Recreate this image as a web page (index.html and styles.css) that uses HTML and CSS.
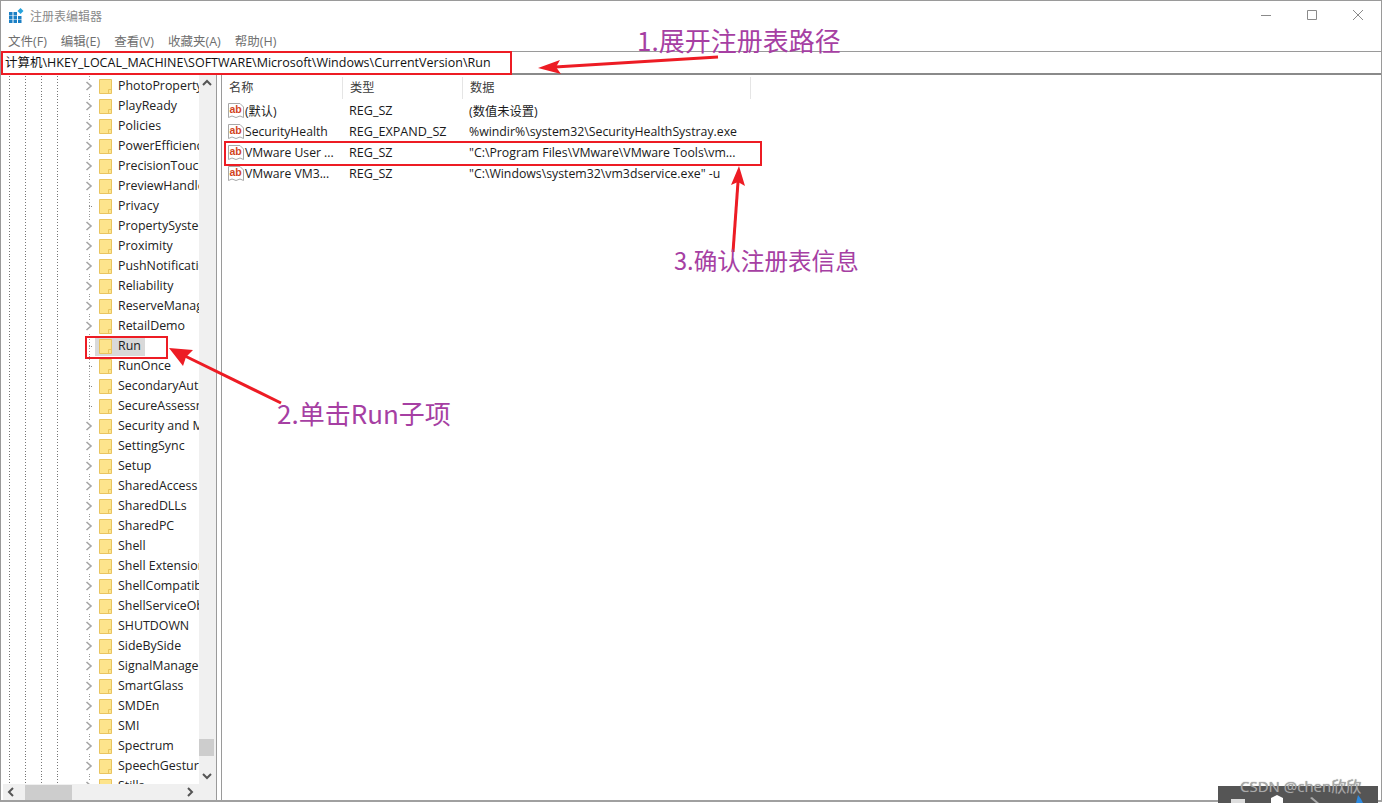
FILE: index.html
```html
<!DOCTYPE html>
<html lang="zh-CN">
<head>
<meta charset="utf-8">
<title>注册表编辑器</title>
<link rel="stylesheet" href="styles.css">
</head>
<body>
<svg class="defs" width="0" height="0" aria-hidden="true">
  <symbol id="folder" viewBox="0 0 13 15">
    <path d="M.5 .5H12.5V14.5H.5Z" fill="#fde48c" stroke="#e9c45f"/>
    <path d="M9.5 14V10.5H12" fill="none" stroke="#e9c45f"/>
  </symbol>
  <symbol id="chev" viewBox="0 0 7 10">
    <path d="M1 1L5.5 5L1 9" fill="none" stroke="#a6a6a6" stroke-width="1.6"/>
  </symbol>
  <symbol id="reg" viewBox="0 0 16 16">
    <path d="M.5 .5H12L15.5 4V14.5L12 13L8 14.5L4 13L.5 14.5Z" fill="#fff" stroke="#a8a8a8"/>
    <text x="1.5" y="10" font-family="Liberation Sans" font-weight="700" font-size="10.5" fill="#d2451e">ab</text>
  </symbol>
</svg>
<div class="window">
  <header class="titlebar">
    <svg class="appicon" width="15" height="15" viewBox="0 0 15 15"><path d="M0 4h3.5v3.5H0zM4.5 4H8v3.5H4.5zM0 8h3.5v3H0zM4.5 8H8v3H4.5zM9 8h3.5v3H9zM0 11.5h3.5V15H0zM4.5 11.5H8V15H4.5zM9 11.5h3.5V15H9z" fill="#1b7fc4"/><path d="M11.5 0l3 3-3 3-3-3z" fill="#27a3dc"/></svg>
    <span class="title">注册表编辑器</span>
    <div class="controls">
      <svg width="12" height="12" viewBox="0 0 12 12"><path d="M1 6.5H11" stroke="#8a8a8a"/></svg>
      <svg width="12" height="12" viewBox="0 0 12 12"><path d="M1.5 1.5H10.5V10.5H1.5Z" fill="none" stroke="#8a8a8a"/></svg>
      <svg width="12" height="12" viewBox="0 0 12 12"><path d="M1 1L11 11M11 1L1 11" stroke="#8a8a8a"/></svg>
    </div>
  </header>
  <nav class="menubar">
    <span>文件(F)</span><span>编辑(E)</span><span>查看(V)</span><span>收藏夹(A)</span><span>帮助(H)</span>
  </nav>
  <div class="address">计算机\HKEY_LOCAL_MACHINE\SOFTWARE\Microsoft\Windows\CurrentVersion\Run</div>
  <main class="panes">
    <section class="treepane">
      <div class="treearea">
        <ul class="tree">
          <li><svg class="ch"><use href="#chev"/></svg><svg class="fo"><use href="#folder"/></svg><span class="lb">PhotoPropertyHandler</span></li>
          <li><svg class="ch"><use href="#chev"/></svg><svg class="fo"><use href="#folder"/></svg><span class="lb">PlayReady</span></li>
          <li><svg class="ch"><use href="#chev"/></svg><svg class="fo"><use href="#folder"/></svg><span class="lb">Policies</span></li>
          <li><svg class="ch"><use href="#chev"/></svg><svg class="fo"><use href="#folder"/></svg><span class="lb">PowerEfficiencyDiagnostics</span></li>
          <li><svg class="ch"><use href="#chev"/></svg><svg class="fo"><use href="#folder"/></svg><span class="lb">PrecisionTouchPad</span></li>
          <li><svg class="ch"><use href="#chev"/></svg><svg class="fo"><use href="#folder"/></svg><span class="lb">PreviewHandlers</span></li>
          <li class="leaf"><svg class="ch"></svg><svg class="fo"><use href="#folder"/></svg><span class="lb">Privacy</span></li>
          <li><svg class="ch"><use href="#chev"/></svg><svg class="fo"><use href="#folder"/></svg><span class="lb">PropertySystem</span></li>
          <li><svg class="ch"><use href="#chev"/></svg><svg class="fo"><use href="#folder"/></svg><span class="lb">Proximity</span></li>
          <li><svg class="ch"><use href="#chev"/></svg><svg class="fo"><use href="#folder"/></svg><span class="lb">PushNotifications</span></li>
          <li><svg class="ch"><use href="#chev"/></svg><svg class="fo"><use href="#folder"/></svg><span class="lb">Reliability</span></li>
          <li><svg class="ch"><use href="#chev"/></svg><svg class="fo"><use href="#folder"/></svg><span class="lb">ReserveManager</span></li>
          <li><svg class="ch"><use href="#chev"/></svg><svg class="fo"><use href="#folder"/></svg><span class="lb">RetailDemo</span></li>
          <li class="leaf sel"><svg class="ch"></svg><svg class="fo"><use href="#folder"/></svg><span class="lb">Run</span></li>
          <li class="leaf"><svg class="ch"></svg><svg class="fo"><use href="#folder"/></svg><span class="lb">RunOnce</span></li>
          <li class="leaf"><svg class="ch"></svg><svg class="fo"><use href="#folder"/></svg><span class="lb">SecondaryAuthFactor</span></li>
          <li class="leaf"><svg class="ch"></svg><svg class="fo"><use href="#folder"/></svg><span class="lb">SecureAssessment</span></li>
          <li><svg class="ch"><use href="#chev"/></svg><svg class="fo"><use href="#folder"/></svg><span class="lb">Security and Maintenance</span></li>
          <li><svg class="ch"><use href="#chev"/></svg><svg class="fo"><use href="#folder"/></svg><span class="lb">SettingSync</span></li>
          <li><svg class="ch"><use href="#chev"/></svg><svg class="fo"><use href="#folder"/></svg><span class="lb">Setup</span></li>
          <li><svg class="ch"><use href="#chev"/></svg><svg class="fo"><use href="#folder"/></svg><span class="lb">SharedAccess</span></li>
          <li><svg class="ch"><use href="#chev"/></svg><svg class="fo"><use href="#folder"/></svg><span class="lb">SharedDLLs</span></li>
          <li><svg class="ch"><use href="#chev"/></svg><svg class="fo"><use href="#folder"/></svg><span class="lb">SharedPC</span></li>
          <li><svg class="ch"><use href="#chev"/></svg><svg class="fo"><use href="#folder"/></svg><span class="lb">Shell</span></li>
          <li><svg class="ch"><use href="#chev"/></svg><svg class="fo"><use href="#folder"/></svg><span class="lb">Shell Extensions</span></li>
          <li><svg class="ch"><use href="#chev"/></svg><svg class="fo"><use href="#folder"/></svg><span class="lb">ShellCompatibility</span></li>
          <li><svg class="ch"><use href="#chev"/></svg><svg class="fo"><use href="#folder"/></svg><span class="lb">ShellServiceObjectDelayLoad</span></li>
          <li><svg class="ch"><use href="#chev"/></svg><svg class="fo"><use href="#folder"/></svg><span class="lb">SHUTDOWN</span></li>
          <li><svg class="ch"><use href="#chev"/></svg><svg class="fo"><use href="#folder"/></svg><span class="lb">SideBySide</span></li>
          <li><svg class="ch"><use href="#chev"/></svg><svg class="fo"><use href="#folder"/></svg><span class="lb">SignalManager</span></li>
          <li><svg class="ch"><use href="#chev"/></svg><svg class="fo"><use href="#folder"/></svg><span class="lb">SmartGlass</span></li>
          <li><svg class="ch"><use href="#chev"/></svg><svg class="fo"><use href="#folder"/></svg><span class="lb">SMDEn</span></li>
          <li><svg class="ch"><use href="#chev"/></svg><svg class="fo"><use href="#folder"/></svg><span class="lb">SMI</span></li>
          <li><svg class="ch"><use href="#chev"/></svg><svg class="fo"><use href="#folder"/></svg><span class="lb">Spectrum</span></li>
          <li><svg class="ch"><use href="#chev"/></svg><svg class="fo"><use href="#folder"/></svg><span class="lb">SpeechGestures</span></li>
          <li><svg class="ch"><use href="#chev"/></svg><svg class="fo"><use href="#folder"/></svg><span class="lb">Stills</span></li>
        </ul>
        <div class="vscroll">
          <svg class="sb-arrow" width="16" height="16" viewBox="0 0 16 16"><path d="M4 10L8 6L12 10" fill="none" stroke="#555" stroke-width="2"/></svg>
          <div class="vtrack"><div class="vthumb"></div></div>
          <svg class="sb-arrow" width="16" height="16" viewBox="0 0 16 16"><path d="M4 6L8 10L12 6" fill="none" stroke="#555" stroke-width="2"/></svg>
        </div>
      </div>
      <div class="hscroll">
        <svg class="sb-arrow" width="16" height="16" viewBox="0 0 16 16"><path d="M10 4L6 8L10 12" fill="none" stroke="#555" stroke-width="2"/></svg>
        <div class="htrack"><div class="hthumb"></div></div>
        <svg class="sb-arrow" width="16" height="16" viewBox="0 0 16 16"><path d="M6 4L10 8L6 12" fill="none" stroke="#555" stroke-width="2"/></svg>
      </div>
    </section>
    <section class="listpane">
      <div class="row head"><span class="c1">名称</span><span class="c2">类型</span><span class="c3">数据</span></div>
      <div class="row"><span class="c1"><svg class="rg"><use href="#reg"/></svg>(默认)</span><span class="c2">REG_SZ</span><span class="c3">(数值未设置)</span></div>
      <div class="row"><span class="c1"><svg class="rg"><use href="#reg"/></svg>SecurityHealth</span><span class="c2">REG_EXPAND_SZ</span><span class="c3">%windir%\system32\SecurityHealthSystray.exe</span></div>
      <div class="row"><span class="c1"><svg class="rg"><use href="#reg"/></svg>VMware User ...</span><span class="c2">REG_SZ</span><span class="c3">"C:\Program Files\VMware\VMware Tools\vm...</span></div>
      <div class="row"><span class="c1"><svg class="rg"><use href="#reg"/></svg>VMware VM3...</span><span class="c2">REG_SZ</span><span class="c3">"C:\Windows\system32\vm3dservice.exe" -u</span></div>
    </section>
  </main>
</div>

<div class="box box-addr"></div>
<div class="box box-run"></div>
<div class="box box-row"></div>
<svg class="arrows" width="1382" height="803" viewBox="0 0 1382 803" aria-hidden="true">
  <path d="M718 57L555 67" stroke="#ed1c24" stroke-width="3"/><path d="M538 68L560 60L556 67L561 74Z" fill="#ed1c24"/>
  <path d="M281 403L185 356" stroke="#ed1c24" stroke-width="3"/><path d="M169 348L193 350L186 357L183 366Z" fill="#ed1c24"/>
  <path d="M733 252L738 182" stroke="#ed1c24" stroke-width="3"/><path d="M739 166L745 186L738 182L731 185Z" fill="#ed1c24"/>
</svg>
<div class="note note1">1.展开注册表路径</div>
<div class="note note2">2.单击Run子项</div>
<div class="note note3">3.确认注册表信息</div>
<div class="tray">
  <svg width="160" height="17" viewBox="0 0 160 17"><path d="M13 13h14v4H13z" fill="#ddd"/><path d="M53 12l6-3 6 3v5H53z" fill="#fff"/><path d="M94 11l7 6h-3l-6-5z" fill="#aaa"/><path d="M138 17l2-8 3 4 2 4z" fill="#2d8ae0"/></svg>
</div>
<div class="mark">CSDN @chen欣欣</div>
</body>
</html>
```
FILE: styles.css
```css
* { box-sizing: border-box; }
html, body { margin: 0; padding: 0; }
body {
  width: 1382px; height: 803px; overflow: hidden; position: relative; background: #fff;
  font-family: "Open Sans", "Noto Sans CJK SC", sans-serif; font-size: 12px; color: #1a1a1a;
}
.defs { position: absolute; }
.window {
  height: 802px; display: flex; flex-direction: column;
  border: 1px solid #9a9a9a; border-bottom: 2px solid #a0a0a0;
}
.titlebar { height: 28px; display: flex; align-items: center; padding-left: 8px; flex: none; }
.appicon { margin-right: 6px; }
.title { color: #8a8a8a; font-size: 12px; font-family: "Noto Sans CJK SC", sans-serif; }
.controls { margin-left: auto; display: flex; gap: 34px; padding-right: 17px; }
.menubar { height: 22px; flex: none; display: flex; gap: 14px; padding-left: 7px; align-items: center; color: #6f6f6f; font-size: 12.5px; }
.address {
  height: 24px; flex: none; border-top: 1px solid #9a9a9a; border-bottom: 2px solid #8a8a8a;
  padding-left: 4px; line-height: 21px; font-size: 12.5px; color: #111; white-space: nowrap;
}
.panes { flex: 1; min-height: 0; display: flex; gap: 4px; }
.treepane { width: 216px; flex: none; display: flex; flex-direction: column; border-right: 1px solid #9a9a9a; }
.treearea { flex: 1; min-height: 0; display: flex; }
.tree { list-style: none; margin: 0; padding: 1px 0 0; flex: 1; min-width: 0; overflow: hidden; font-size: 12.4px; }
.tree li {
  height: 20px; display: flex; align-items: center; padding-left: 84px; white-space: nowrap; overflow: hidden;
  background-image:
    repeating-linear-gradient(#777 0 1px, transparent 1px 3px),
    repeating-linear-gradient(#777 0 1px, transparent 1px 3px),
    repeating-linear-gradient(#777 0 1px, transparent 1px 3px),
    repeating-linear-gradient(#777 0 1px, transparent 1px 3px),
    repeating-linear-gradient(#999 0 1px, transparent 1px 3px);
  background-size: 1px 100%;
  background-repeat: no-repeat;
  background-position: 8px 0, 24px 0, 40px 0, 56px 0, 88px 0;
}
.ch { width: 8px; height: 10px; flex: none; background: #fff; box-shadow: 0 0 0 1px #fff; }
.leaf .ch { background: linear-gradient(90deg, transparent 4px, #888 4px 5px, transparent 5px 6px, #888 6px 7px, transparent 7px); box-shadow: none; height: 1px; }
.fo { width: 13px; height: 15px; flex: none; margin-left: 6px; }
.lb { margin-left: 5px; padding: 0 1px; line-height: 20px; color: #222; }
.sel .fo { position: relative; }
.sel .lb { background: #d9d9d9; box-shadow: -22px 0 0 #d9d9d9; padding-right: 4px; }
.vscroll { width: 17px; flex: none; background: #f0f0f0; display: flex; flex-direction: column; }
.vtrack { flex: 1; padding-top: 648px; }
.vthumb { height: 17px; width: 15px; background: #cdcdcd; }
.hscroll { height: 16px; flex: none; background: #f0f0f0; display: flex; align-items: center; margin-left: 2px; padding-right: 18px; }
.htrack { flex: 1; padding-left: 6px; }
.hthumb { width: 47px; height: 15px; background: #cdcdcd; }
.listpane { flex: 1; min-width: 0; border-left: 1px solid #9a9a9a; padding-top: 2px; font-size: 12.2px; }
.row { display: flex; height: 21px; align-items: center; white-space: nowrap; }
.row.head { height: 22px; color: #3c3c3c; margin-bottom: 1px; }
.head span { border-right: 1px solid #e5e5e5; height: 22px; line-height: 22px; padding-left: 7px; }
.c1 { width: 121px; padding-left: 7px; display: flex; align-items: center; }
.c2 { width: 120px; padding-left: 6px; }
.c3 { width: 288px; padding-left: 6px; }
.row:not(.head) .c2 { font-size: 12.6px; }
.row:not(.head) .c3 { font-size: 12.3px; }
.row:not(.head) .c1 { padding-left: 6px; }
.rg { width: 16px; height: 16px; flex: none; margin-right: 1px; }
.box { position: absolute; border: 2px solid #ed1c24; }
.box-addr { left: 1px; top: 51px; width: 511px; height: 24px; }
.box-run { left: 85px; top: 336px; width: 83px; height: 23px; }
.box-row { left: 224px; top: 141px; width: 538px; height: 25px; }
.arrows { position: absolute; left: 0; top: 0; pointer-events: none; }
.note { position: absolute; font-size: 26px; line-height: 30px; color: #a63fa3; white-space: nowrap; font-family: "Noto Sans CJK SC", sans-serif; }
.note1 { left: 637px; top: 25px; }
.note2 { left: 277px; top: 398px; }
.note3 { left: 674px; top: 245px; font-size: 23.6px; }
.tray { position: absolute; left: 1218px; top: 786px; width: 160px; height: 17px; background: #555; }
.mark { position: absolute; left: 1240px; top: 776px; font-size: 15px; line-height: 20px; color: #aaa; text-shadow: 0 0 1px #777; white-space: nowrap; }
```
